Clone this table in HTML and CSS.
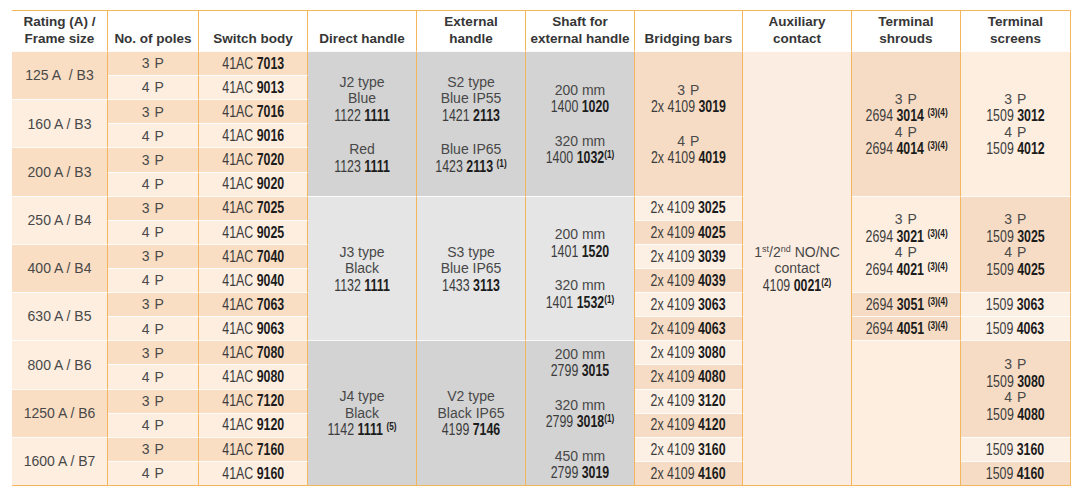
FILE: index.html
```html
<!DOCTYPE html>
<html lang="en">
<head>
<meta charset="utf-8">
<title>Switch accessories table</title>
<link rel="stylesheet" href="styles.css">
</head>
<body>
<table class="spec">
  <thead>
    <tr>
      <th class="c1">Rating (A) /<br>Frame size</th>
      <th class="c2">No. of poles</th>
      <th class="c3">Switch body</th>
      <th class="c4">Direct handle</th>
      <th class="c5">External<br>handle</th>
      <th class="c6">Shaft for<br>external handle</th>
      <th class="c7">Bridging bars</th>
      <th class="c8">Auxiliary<br>contact</th>
      <th class="c9">Terminal<br>shrouds</th>
      <th class="c10">Terminal<br>screens</th>
    </tr>
  </thead>
  <tbody>
    <tr>
      <td rowspan="2" class="dk w">125 A&nbsp; / B3</td>
      <td class="dk p">3 P</td>
      <td class="dk"><span class="n">41AC <b>7013</b></span></td>
      <td rowspan="6" class="g1 multi"><div class="w">J2 type</div><div class="w">Blue</div><div class="n">1122 <b>1111</b></div><div class="w gap">Red</div><div class="n">1123 <b>1111</b></div></td>
      <td rowspan="6" class="g1 multi"><div class="w">S2 type</div><div class="w">Blue IP55</div><div class="n">1421 <b>2113</b></div><div class="w gap">Blue IP65</div><div class="n">1423 <b>2113</b> <sup>(1)</sup></div></td>
      <td rowspan="6" class="g1 multi"><div class="w">200 mm</div><div class="n">1400 <b>1020</b></div><div class="w gap">320 mm</div><div class="n">1400 <b>1032</b><sup>(1)</sup></div></td>
      <td rowspan="6" class="bdk multi"><div class="p">3 P</div><div class="n">2x 4109 <b>3019</b></div><div class="p gap">4 P</div><div class="n">2x 4109 <b>4019</b></div></td>
      <td rowspan="18" class="aux multi"><div class="w">1<sup class="o">st</sup>/2<sup class="o">nd</sup> NO/NC</div><div class="w">contact</div><div class="n">4109 <b>0021</b><sup>(2)</sup></div></td>
      <td rowspan="6" class="bdk multi"><div class="p">3 P</div><div class="n">2694 <b>3014</b> <sup>(3)(4)</sup></div><div class="p">4 P</div><div class="n">2694 <b>4014</b> <sup>(3)(4)</sup></div></td>
      <td rowspan="6" class="lt multi"><div class="p">3 P</div><div class="n">1509 <b>3012</b></div><div class="p">4 P</div><div class="n">1509 <b>4012</b></div></td>
    </tr>
    <tr>
      <td class="lt p">4 P</td>
      <td class="lt"><span class="n">41AC <b>9013</b></span></td>
    </tr>
    <tr>
      <td rowspan="2" class="lt w">160 A / B3</td>
      <td class="dk p">3 P</td>
      <td class="dk"><span class="n">41AC <b>7016</b></span></td>
    </tr>
    <tr>
      <td class="lt p">4 P</td>
      <td class="lt"><span class="n">41AC <b>9016</b></span></td>
    </tr>
    <tr>
      <td rowspan="2" class="dk w">200 A / B3</td>
      <td class="dk p">3 P</td>
      <td class="dk"><span class="n">41AC <b>7020</b></span></td>
    </tr>
    <tr>
      <td class="lt p">4 P</td>
      <td class="lt"><span class="n">41AC <b>9020</b></span></td>
    </tr>
    <tr>
      <td rowspan="2" class="lt w">250 A / B4</td>
      <td class="dk p">3 P</td>
      <td class="dk"><span class="n">41AC <b>7025</b></span></td>
      <td rowspan="6" class="g2 multi"><div class="w">J3 type</div><div class="w">Black</div><div class="n">1132 <b>1111</b></div></td>
      <td rowspan="6" class="g2 multi"><div class="w">S3 type</div><div class="w">Blue IP65</div><div class="n">1433 <b>3113</b></div></td>
      <td rowspan="6" class="g2 multi"><div class="w">200 mm</div><div class="n">1401 <b>1520</b></div><div class="w gap">320 mm</div><div class="n">1401 <b>1532</b><sup>(1)</sup></div></td>
      <td class="blt"><span class="n">2x 4109 <b>3025</b></span></td>
      <td rowspan="4" class="lt multi"><div class="p">3 P</div><div class="n">2694 <b>3021</b> <sup>(3)(4)</sup></div><div class="p">4 P</div><div class="n">2694 <b>4021</b> <sup>(3)(4)</sup></div></td>
      <td rowspan="4" class="bdk multi"><div class="p">3 P</div><div class="n">1509 <b>3025</b></div><div class="p">4 P</div><div class="n">1509 <b>4025</b></div></td>
    </tr>
    <tr>
      <td class="lt p">4 P</td>
      <td class="lt"><span class="n">41AC <b>9025</b></span></td>
      <td class="bdk"><span class="n">2x 4109 <b>4025</b></span></td>
    </tr>
    <tr>
      <td rowspan="2" class="dk w">400 A / B4</td>
      <td class="dk p">3 P</td>
      <td class="dk"><span class="n">41AC <b>7040</b></span></td>
      <td class="blt"><span class="n">2x 4109 <b>3039</b></span></td>
    </tr>
    <tr>
      <td class="lt p">4 P</td>
      <td class="lt"><span class="n">41AC <b>9040</b></span></td>
      <td class="bdk"><span class="n">2x 4109 <b>4039</b></span></td>
    </tr>
    <tr>
      <td rowspan="2" class="lt w">630 A / B5</td>
      <td class="dk p">3 P</td>
      <td class="dk"><span class="n">41AC <b>7063</b></span></td>
      <td class="blt"><span class="n">2x 4109 <b>3063</b></span></td>
      <td class="bdk"><span class="n">2694 <b>3051</b> <sup>(3)(4)</sup></span></td>
      <td class="blt"><span class="n">1509 <b>3063</b></span></td>
    </tr>
    <tr>
      <td class="lt p">4 P</td>
      <td class="lt"><span class="n">41AC <b>9063</b></span></td>
      <td class="bdk"><span class="n">2x 4109 <b>4063</b></span></td>
      <td class="bdk"><span class="n">2694 <b>4051</b> <sup>(3)(4)</sup></span></td>
      <td class="blt"><span class="n">1509 <b>4063</b></span></td>
    </tr>
    <tr>
      <td rowspan="2" class="lt w">800 A / B6</td>
      <td class="dk p">3 P</td>
      <td class="dk"><span class="n">41AC <b>7080</b></span></td>
      <td rowspan="6" class="g1 multi"><div class="w">J4 type</div><div class="w">Black</div><div class="n">1142 <b>1111</b> <sup>(5)</sup></div></td>
      <td rowspan="6" class="g1 multi"><div class="w">V2 type</div><div class="w">Black IP65</div><div class="n">4199 <b>7146</b></div></td>
      <td rowspan="6" class="g1 multi"><div class="w">200 mm</div><div class="n">2799 <b>3015</b></div><div class="w gap">320 mm</div><div class="n">2799 <b>3018</b><sup>(1)</sup></div><div class="w gap">450 mm</div><div class="n">2799 <b>3019</b></div></td>
      <td class="blt"><span class="n">2x 4109 <b>3080</b></span></td>
      <td rowspan="6" class="lt"></td>
      <td rowspan="4" class="bdk multi"><div class="p">3 P</div><div class="n">1509 <b>3080</b></div><div class="p">4 P</div><div class="n">1509 <b>4080</b></div></td>
    </tr>
    <tr>
      <td class="lt p">4 P</td>
      <td class="lt"><span class="n">41AC <b>9080</b></span></td>
      <td class="bdk"><span class="n">2x 4109 <b>4080</b></span></td>
    </tr>
    <tr>
      <td rowspan="2" class="dk w">1250 A / B6</td>
      <td class="dk p">3 P</td>
      <td class="dk"><span class="n">41AC <b>7120</b></span></td>
      <td class="blt"><span class="n">2x 4109 <b>3120</b></span></td>
    </tr>
    <tr>
      <td class="lt p">4 P</td>
      <td class="lt"><span class="n">41AC <b>9120</b></span></td>
      <td class="bdk"><span class="n">2x 4109 <b>4120</b></span></td>
    </tr>
    <tr>
      <td rowspan="2" class="lt w">1600 A / B7</td>
      <td class="dk p">3 P</td>
      <td class="dk"><span class="n">41AC <b>7160</b></span></td>
      <td class="blt"><span class="n">2x 4109 <b>3160</b></span></td>
      <td class="blt"><span class="n">1509 <b>3160</b></span></td>
    </tr>
    <tr>
      <td class="lt p">4 P</td>
      <td class="lt"><span class="n">41AC <b>9160</b></span></td>
      <td class="bdk"><span class="n">2x 4109 <b>4160</b></span></td>
      <td class="bdk"><span class="n">1509 <b>4160</b></span></td>
    </tr>
  </tbody>
</table>
</body>
</html>
```

FILE: styles.css
```css
html, body {
  margin: 0;
  padding: 0;
  background: #ffffff;
}

body {
  padding: 10px 0 0 12px;
  font-family: "Liberation Sans", Arial, sans-serif;
}

.spec {
  border-collapse: separate;
  border-spacing: 0;
  table-layout: fixed;
  width: 1059px;
  border-top: 1px solid #f3b55e;
  border-bottom: 1.5px solid #f3b55e;
}

.spec th,
.spec td {
  box-sizing: border-box;
  border-right: 1px solid #f3b55e;
  padding: 0;
  text-align: center;
}

.spec th {
  height: 40px;
  vertical-align: bottom;
  padding-bottom: 4px;
  font-size: 13.5px;
  line-height: 16.5px;
  font-weight: bold;
  color: #363636;
  background: #ffffff;
}

.c1 { width: 96px; }
.c2 { width: 91px; }
.c3 { width: 109px; }
.c4 { width: 109px; }
.c5 { width: 109px; }
.c6 { width: 109px; }
.c7 { width: 108px; }
.c8 { width: 109px; }
.c9 { width: 109px; }
.c10 { width: 110px; }

.spec tbody tr {
  height: 24.11px;
}

.spec td {
  border-top: 1px solid rgba(255, 255, 255, 0.85);
  vertical-align: middle;
  font-family: "Liberation Sans", Arial, sans-serif;
  font-size: 15px;
  line-height: 16.5px;
  color: #444444;
}

.spec .n {
  font-size: 16.5px;
  transform: scaleX(0.75);
  transform-origin: center center;
  white-space: nowrap;
  color: #3c3c3c;
}

.spec span.n {
  display: inline-block;
}

.spec td b {
  font-weight: bold;
  color: #1c1c1c;
}

.spec .w {
  font-size: 14px;
  color: #484848;
}

.spec .p {
  font-size: 14px;
  letter-spacing: 0.5px;
  color: #4a4a4a;
}

.multi > div {
  white-space: nowrap;
}

.multi > .gap {
  margin-top: 18px;
}

.spec sup {
  font-size: 11px;
  font-weight: bold;
  line-height: 0;
  vertical-align: 5px;
  color: #1c1c1c;
}

.spec sup.o {
  font-weight: normal;
  font-size: 9px;
  color: #484848;
}

.dk { background: #f9dec4; }
.lt { background: #fdeee0; }
.bdk { background: #f7dcc5; }
.blt { background: #fcefe4; }
.aux { background: #fcede2; }
.g1 { background: #d3d3d3; }
.g2 { background: #e5e5e5; }
```
